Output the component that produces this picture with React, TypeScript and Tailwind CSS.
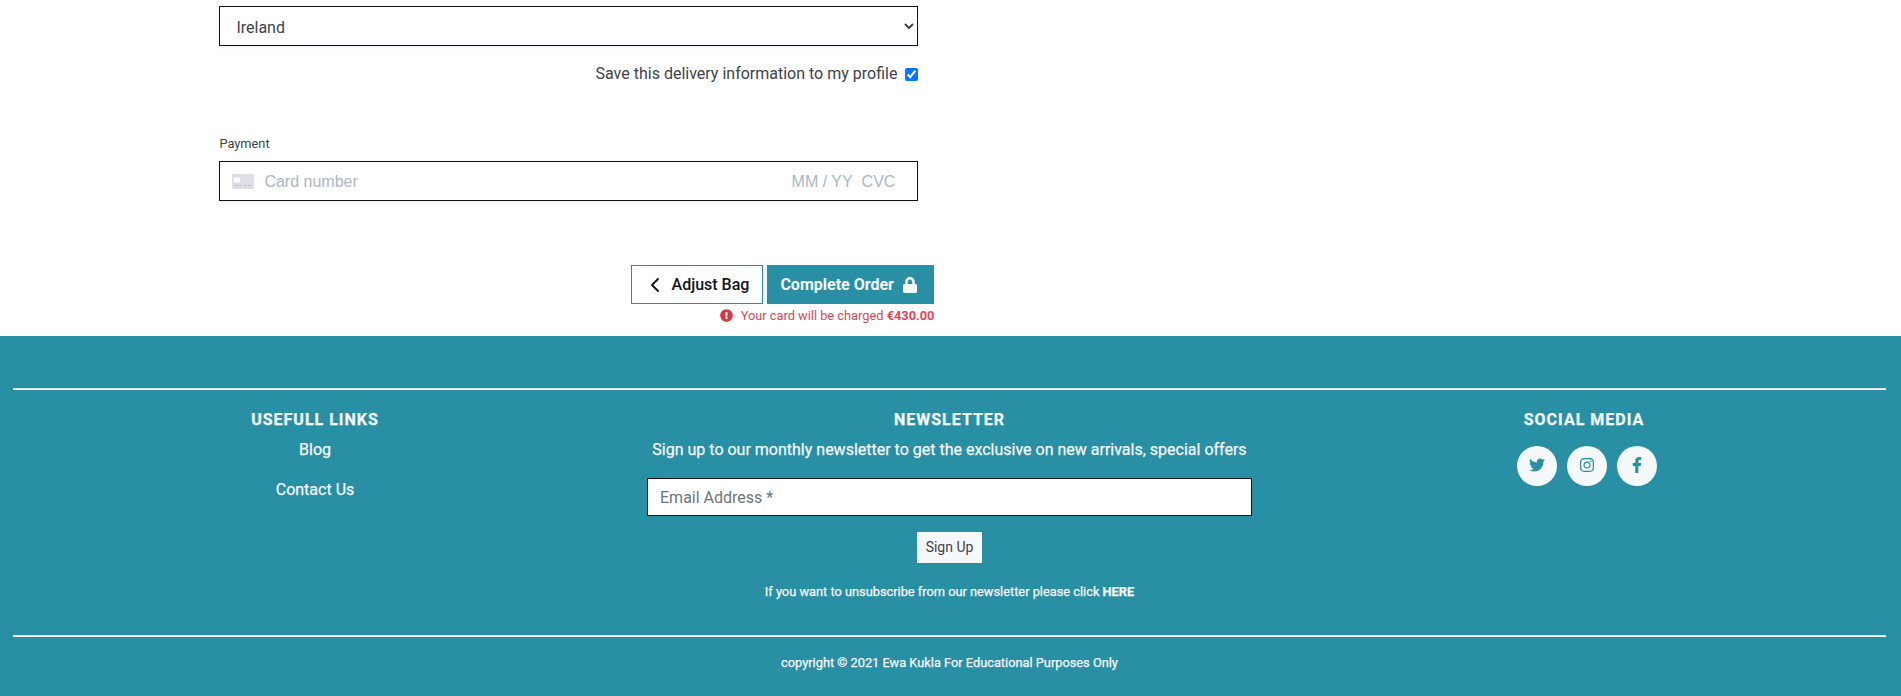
import { FaLock, FaExclamationCircle, FaTwitter, FaInstagram, FaFacebookF } from "react-icons/fa";
import { FaChevronLeft } from "react-icons/fa6";

const socials = [
  { name: "Twitter", Icon: FaTwitter },
  { name: "Instagram", Icon: FaInstagram },
  { name: "Facebook", Icon: FaFacebookF },
];

function CardIcon() {
  return (
    <svg width="22" height="15" viewBox="0 0 22 15" aria-hidden="true" className="mt-px">
      <rect width="22" height="15" rx="1.5" fill="#dcdfe8" />
      <rect x="2" y="3.5" width="6" height="5" rx="1" fill="#fff" />
      <path d="M2.5 11.5h17" stroke="#bcc2d0" strokeWidth="1.2" strokeDasharray="3.5 1" />
    </svg>
  );
}

function CheckoutForm() {
  return (
    <form className="flex h-[336px] flex-col pt-1.5 pl-[219.4px] text-base font-normal text-[#41424c]">
      <select
        defaultValue="Ireland"
        className="h-10 w-[699px] border border-[#101119] bg-white pt-2 pr-0 pb-1.5 pl-3 text-[#41424c] shadow-[0_1px_3px_rgba(50,80,110,0.1)]"
      >
        <option>Ireland</option>
      </select>
      <label className="mt-4 flex h-6 w-[699px] items-center justify-end gap-2">
        <span>Save this delivery information to my profile</span>
        <input type="checkbox" defaultChecked className="size-[13px]" />
      </label>
      <p className="mt-12 flex h-5 items-center text-[12.8px] leading-5">Payment</p>
      <div className="mt-[7px] flex h-10 w-[699px] shrink-0 items-center border border-[#101119] bg-white pr-[22px] pl-3 font-['Liberation_Sans',sans-serif] text-[#aab7c4] shadow-[0_1px_3px_rgba(50,80,110,0.1)]">
        <CardIcon />
        <span className="ml-2.5 pt-0.5">Card number</span>
        <span className="ml-auto pt-0.5">MM / YY</span>
        <span className="ml-[9px] pt-0.5">CVC</span>
      </div>
      <div className="mt-16 flex h-[39px] w-[715px] shrink-0 justify-end gap-1">
        <button type="button" className="flex w-[132px] items-center justify-end border border-[#298fa5] bg-white pr-[13px] font-medium text-[#131420]">
          <FaChevronLeft size={16} className="mr-2" />
          Adjust Bag
        </button>
        <button type="button" className="flex w-[167px] items-center bg-[#298fa5] pl-[13px] font-bold text-[#f5f9fa]">
          Complete Order
          <FaLock size={16} className="ml-2" />
        </button>
      </div>
      <p className="mt-px flex h-5 w-[715px] items-center justify-end text-[12.8px] leading-5 text-[#e04757]">
        <FaExclamationCircle size={13} className="mr-2 text-[#dc3545]" />
        <span className="pt-0.5">
          Your card will be charged <strong className="font-bold">€430.00</strong>
        </span>
      </p>
    </form>
  );
}

function Heading({ children }: { children: string }) {
  return <h2 className="h-6 text-base leading-6 font-bold tracking-[1px]">{children}</h2>;
}

function Footer() {
  return (
    <footer className="h-[360px] overflow-hidden bg-[#298fa5] pt-[52px] pr-[15px] pl-[13px] font-normal text-[#f5f9fa] [-webkit-text-stroke:0.25px]">
      <div className="h-0.5 border-t border-b border-t-[#dfe3e6] border-b-white" />
      <div className="-ml-[14.5px] grid h-[245px] grid-cols-[633px_636px_639px] pt-[18px] text-center">
        <section>
          <Heading>USEFULL LINKS</Heading>
          <ul className="mt-1.5 flex flex-col gap-4">
            <li><a href="#">Blog</a></li>
            <li><a href="#">Contact Us</a></li>
          </ul>
        </section>
        <section className="flex flex-col items-center">
          <Heading>NEWSLETTER</Heading>
          <p className="mt-1.5">Sign up to our monthly newsletter to get the exclusive on new arrivals, special offers</p>
          <input
            placeholder="Email Address *"
            className="mt-4 h-[38px] w-[605px] shrink-0 border border-[#131420] bg-white px-3 text-[#131420] [-webkit-text-stroke:0] placeholder:text-[#6c757d]"
          />
          <button type="button" className="mt-4 h-[31px] w-[65px] shrink-0 bg-[#f5f9fa] pb-0.5 text-sm text-[#41424c] [-webkit-text-stroke:0]">
            Sign Up
          </button>
          <p className="mt-[19px] text-[12.8px] leading-5">
            If you want to unsubscribe from our newsletter please click <a href="#" className="font-bold">HERE</a>
          </p>
        </section>
        <section className="flex flex-col items-center">
          <div className="mr-1.5">
            <Heading>SOCIAL MEDIA</Heading>
          </div>
          <div className="mt-3.5 flex gap-2.5">
            {socials.map(({ name, Icon }) => (
              <a key={name} href="#" aria-label={name} className="flex size-10 items-center justify-center rounded-full bg-[#f5f9fa] pb-0.5 text-[#298fa5]">
                <Icon size={16} />
              </a>
            ))}
          </div>
        </section>
      </div>
      <div className="h-0.5 border-t border-b border-t-[#dfe3e6] border-b-white" />
      <p className="mt-4 text-center text-[12.8px] leading-5">copyright © 2021 Ewa Kukla For Educational Purposes Only</p>
    </footer>
  );
}

export default function App() {
  return (
    <main className="h-[696px] w-full overflow-hidden bg-white font-['Roboto',sans-serif]">
      <CheckoutForm />
      <Footer />
    </main>
  );
}
